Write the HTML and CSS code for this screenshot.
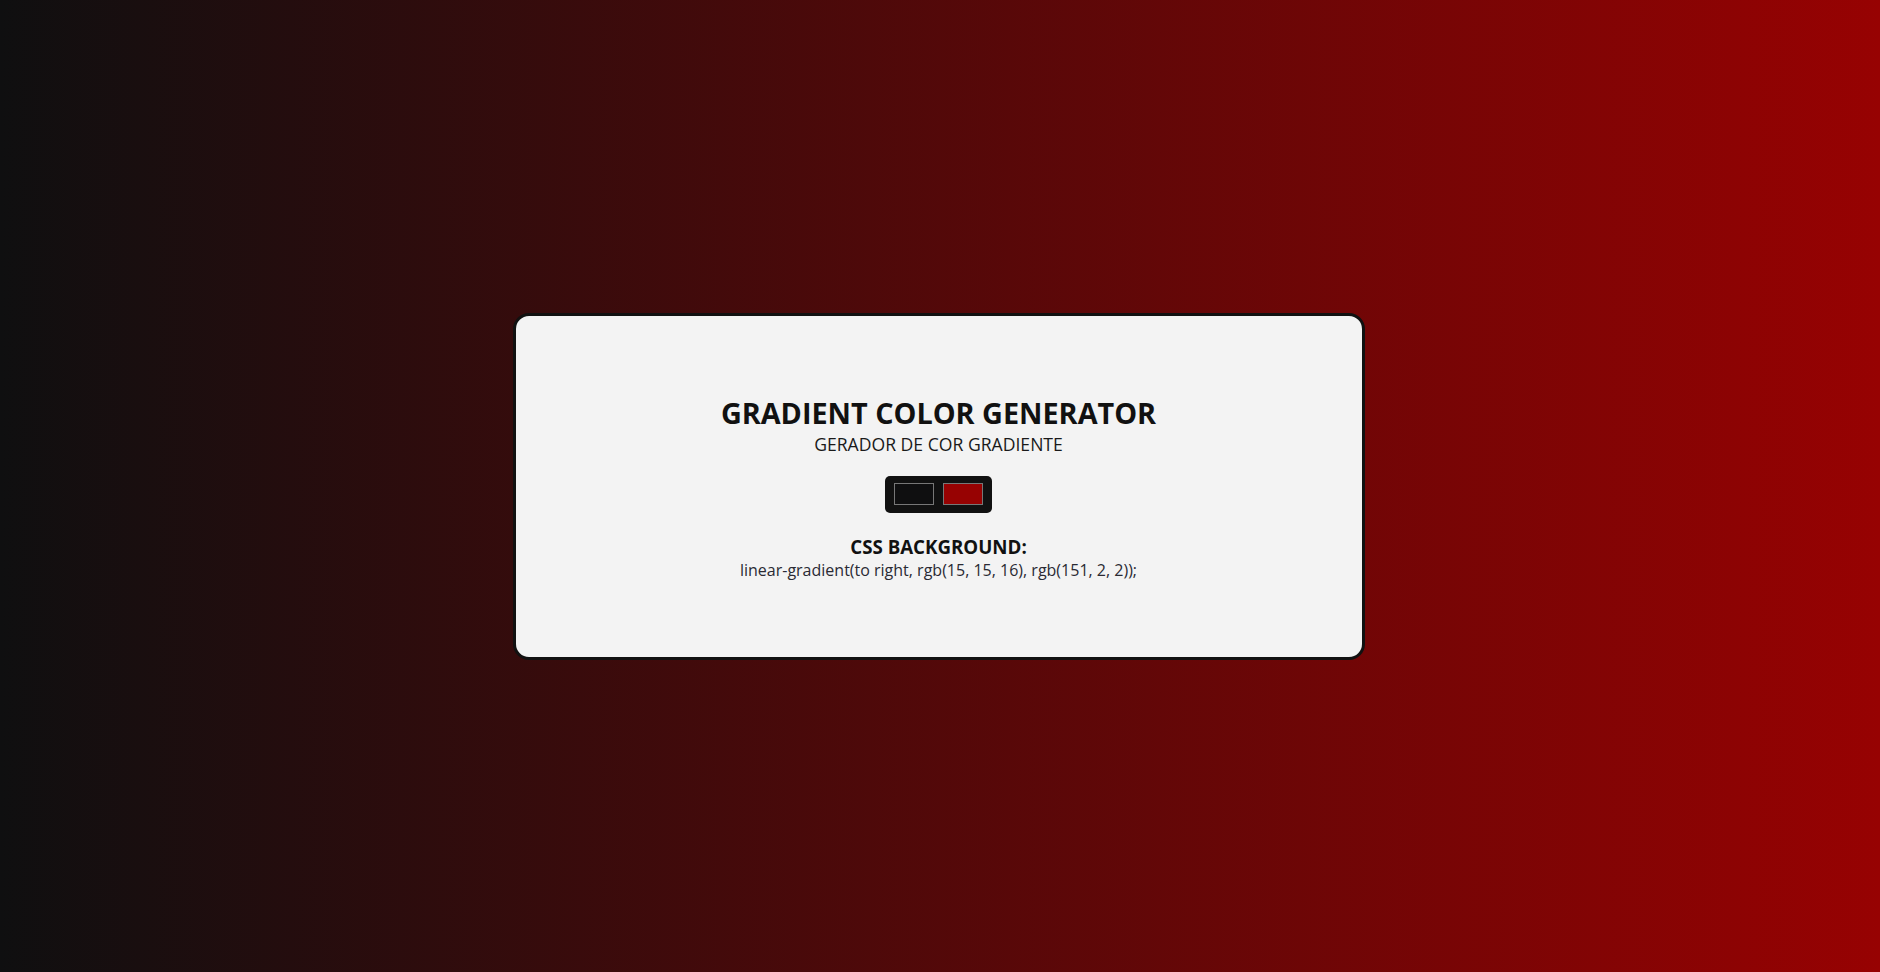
FILE: index.html
```html
<!DOCTYPE html>
<html lang="pt">
<head>
<meta charset="utf-8">
<title>Gradient Color Generator</title>
<link rel="stylesheet" href="styles.css">
</head>
<body class="page">
  <main class="card">
    <h1 class="title">GRADIENT COLOR GENERATOR</h1>
    <p class="subtitle">GERADOR DE COR GRADIENTE</p>
    <div class="pickers">
      <input class="picker" type="color" value="#0f0f10">
      <input class="picker" type="color" value="#970202">
    </div>
    <h3 class="label">CSS BACKGROUND:</h3>
    <p class="code">linear-gradient(to right, rgb(15, 15, 16), rgb(151, 2, 2));</p>
  </main>
</body>
</html>
```

FILE: styles.css
```css
* { box-sizing: border-box; }

html, body { height: 100%; }

.page {
  margin: 0;
  min-height: 100vh;
  display: flex;
  align-items: center;
  justify-content: center;
  background: linear-gradient(to right, rgb(15, 15, 16), rgb(151, 2, 2));
  font-family: "Open Sans", "Noto Sans", sans-serif;
  color: #111;
}

.card {
  width: 852px;
  margin-right: 3px;
  padding: 77px 0 76px;
  background: #f3f3f3;
  border: 3px solid #111;
  border-radius: 16px;
  display: flex;
  flex-direction: column;
  align-items: center;
  text-align: center;
}

.title {
  margin: 0;
  font-size: 28.8px;
  font-weight: 700;
  line-height: normal;
  color: #111;
}

.subtitle {
  margin: 0 0 20px;
  font-size: 17.6px;
  font-weight: 400;
  line-height: normal;
  color: #1a1a1a;
}

.pickers {
  display: flex;
  gap: 9px;
  padding: 7px 9px 8px;
  background: #111;
  border-radius: 5px;
  margin-bottom: 21px;
}

.picker {
  -webkit-appearance: none;
  appearance: none;
  width: 40px;
  height: 22px;
  padding: 0;
  margin: 0;
  border: none;
  background: transparent;
  cursor: pointer;
  display: block;
}

.picker::-webkit-color-swatch-wrapper { padding: 0; }
.picker::-webkit-color-swatch { border: 1px solid #777; border-radius: 0; }

.label {
  margin: 0;
  font-size: 18.72px;
  font-weight: 700;
  line-height: normal;
  color: #111;
}

.code {
  margin: 0;
  font-size: 16px;
  line-height: normal;
  color: #2a2a33;
}
```
